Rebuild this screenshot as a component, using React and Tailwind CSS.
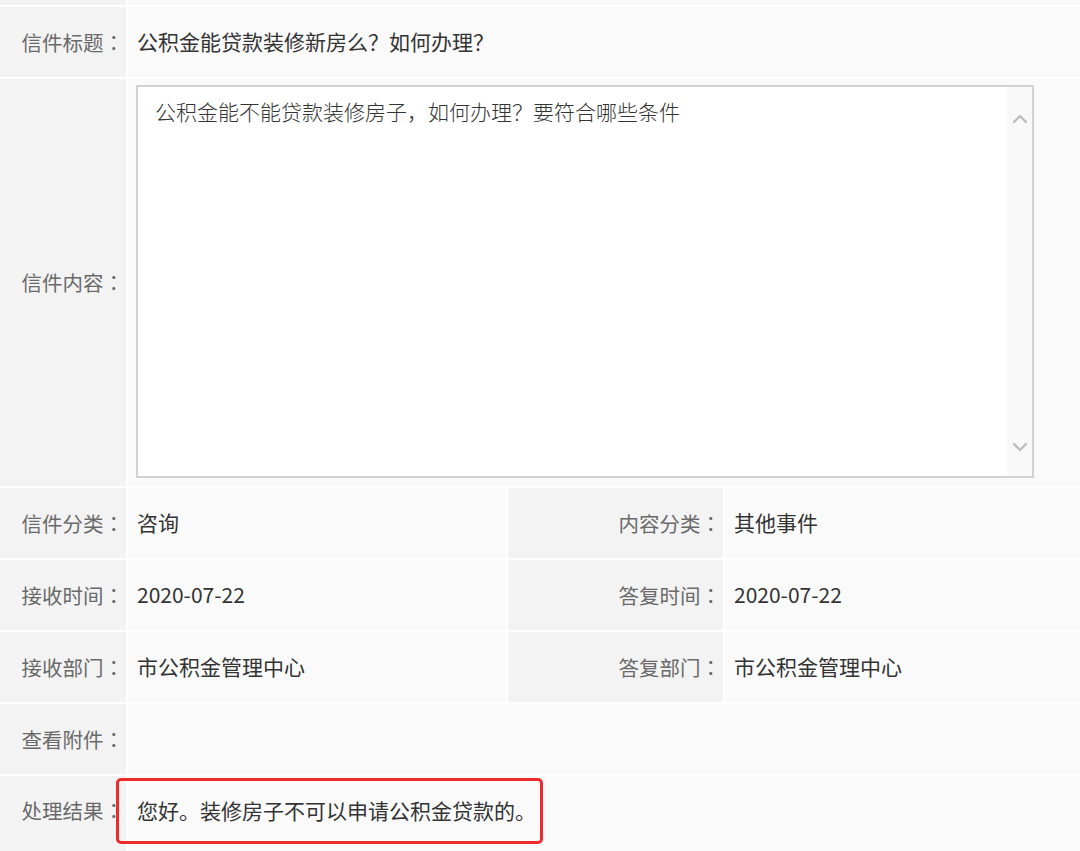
import React from 'react';

const letter = {
  title: '公积金能贷款装修新房么？如何办理？',
  content: '公积金能不能贷款装修房子，如何办理？要符合哪些条件',
  category: '咨询',
  contentCategory: '其他事件',
  receivedAt: '2020-07-22',
  repliedAt: '2020-07-22',
  receiveDept: '市公积金管理中心',
  replyDept: '市公积金管理中心',
  result: '您好。装修房子不可以申请公积金贷款的。',
};

// centred full-width colon, as the original page renders it
const Label = ({ children, className = '' }) => (
  <div className={`bg-[#f3f3f3] flex items-center justify-end pr-[2px] text-[20.5px] text-[#6a6a6a] ${className}`}>
    {children}
    <span className="font-['Noto_Sans_CJK_TC',sans-serif]">：</span>
  </div>
);

const Value = ({ children, className = '' }) => (
  <div className={`bg-[#fafafa] flex items-center pl-[9px] text-[21px] text-[#333] ${className}`}>
    {children}
  </div>
);

const Chevron = ({ down }) => (
  <svg width="16" height="10" viewBox="0 0 16 10" fill="none">
    <polyline
      points={down ? '2,2 8,8 14,2' : '2,8 8,2 14,8'}
      stroke="#bdbdbd"
      strokeWidth="2.4"
      strokeLinecap="round"
      strokeLinejoin="round"
    />
  </svg>
);

export default function App() {
  return (
    <div className="w-[1080px] min-h-[851px] bg-white flex flex-col gap-[2px] font-['Noto_Sans_CJK_SC','Microsoft_YaHei',sans-serif]">
      {/* partial row from above */}
      <div className="grid grid-cols-[126px_1fr] gap-[2px] h-[5px]">
        <div className="bg-[#f3f3f3]" />
        <div className="bg-[#fafafa]" />
      </div>

      <div className="grid grid-cols-[126px_1fr] gap-[2px] h-[70px]">
        <Label>信件标题</Label>
        <Value>{letter.title}</Value>
      </div>

      <div className="grid grid-cols-[126px_1fr] gap-[2px] h-[407px]">
        <Label>信件内容</Label>
        <div className="bg-[#fafafa] pt-[6px] pl-[8px]">
          <div className="w-[898px] h-[393px] border-2 border-[#d2d2d2] bg-white flex">
            <div className="flex-1 pl-[17px] pt-[11px] text-[21px] leading-[26px] text-[#333] font-light">
              {letter.content}
            </div>
            <div className="w-[25px] bg-[#f8f8f8] flex flex-col justify-between items-center pt-[27px] pb-[24px]">
              <Chevron />
              <Chevron down />
            </div>
          </div>
        </div>
      </div>

      <div className="grid grid-cols-[126px_378px_215px_1fr] gap-[2px] h-[70px]">
        <Label>信件分类</Label>
        <Value>{letter.category}</Value>
        <Label>内容分类</Label>
        <Value>{letter.contentCategory}</Value>
      </div>

      <div className="grid grid-cols-[126px_378px_215px_1fr] gap-[2px] h-[70px]">
        <Label>接收时间</Label>
        <Value>{letter.receivedAt}</Value>
        <Label>答复时间</Label>
        <Value>{letter.repliedAt}</Value>
      </div>

      <div className="grid grid-cols-[126px_378px_215px_1fr] gap-[2px] h-[70px]">
        <Label>接收部门</Label>
        <Value>{letter.receiveDept}</Value>
        <Label>答复部门</Label>
        <Value>{letter.replyDept}</Value>
      </div>

      <div className="grid grid-cols-[126px_1fr] gap-[2px] h-[70px]">
        <Label>查看附件</Label>
        <Value />
      </div>

      <div className="grid grid-cols-[126px_1fr] gap-[2px] h-[75px]">
        <Label className="pb-[6px]">处理结果</Label>
        <Value className="relative pb-[6px]">
          {letter.result}
          {/* red highlight box drawn over the answer */}
          <div className="absolute left-[-12px] top-[2px] w-[427px] h-[66px] border-[3px] border-[#ee2b2b] rounded-[5px] pointer-events-none" />
        </Value>
      </div>
    </div>
  );
}
